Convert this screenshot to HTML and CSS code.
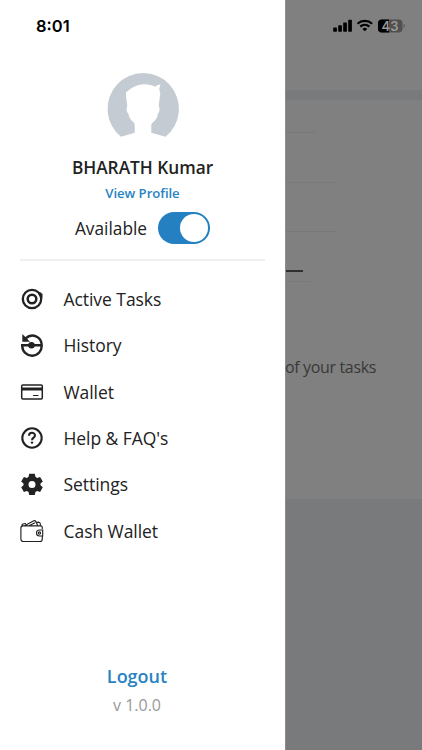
FILE: index.html
```
<!DOCTYPE html>
<html lang="en">
<head>
<meta charset="utf-8">
<meta name="viewport" content="width=device-width, initial-scale=1">
<title>Menu</title>
<link rel="stylesheet" href="styles.css">
</head>
<body>
<div class="screen">
  <aside class="drawer">
    <div class="clock">8:01</div>
    <section class="profile">
      <svg class="avatar" viewBox="0 0 72 64">
        <path fill="#c4cbd2" d="M14 63.700A35.700 35.700 0 1 1 58.500 63.700L44.300 59.700V52Q44.300 50.500 46 49.300C49 47 50.500 44.500 50.700 41C52.800 39 53.200 35.500 51.700 33L53.300 20.300L52.200 16.500L53.300 11L51 12.500L50.500 11.800L48.500 13.700C40 9.500 29 10 19 19.300V23L20.300 33C18.800 35.500 19.500 39 21.500 41C22 44.500 23.500 47 26.500 49.300Q27.700 50.500 27.700 52V59.700Z"/>
      </svg>
      <h1 class="name">BHARATH Kumar</h1>
      <a class="view">View Profile</a>
      <div class="availability"><span>Available</span><span class="switch"><span class="knob"></span></span></div>
    </section>
    <nav class="menu">
      <a class="item"><svg viewBox="0 0 24 24" fill="none" stroke="#222"><circle cx="12" cy="12" r="9.200" stroke-width="2.300"/><circle cx="12" cy="12" r="4.300" stroke-width="2.500"/><path d="M18 6.500l2-1.500 2.500 2v4l-2.500-1z" fill="#222" stroke="none"/></svg><span>Active Tasks</span></a>
      <a class="item"><svg viewBox="0 0 24 24" fill="none" stroke="#222"><path d="M1 12.300h21.500M2.300 13.500A9.600 9.600 0 0 0 21.700 12.500C21.700 3.500 12 -.5 5.500 5.500" stroke-width="2.400"/><path d="M2.300 1v7.800H10z" fill="#222" stroke="none"/><circle cx="11.500" cy="12.300" r="3.300" fill="#222" stroke="none"/></svg><span>History</span></a>
      <a class="item"><svg viewBox="0 0 24 24" fill="none" stroke="#222"><rect x="1.700" y="4.900" width="20.600" height="14" rx="1.200" stroke-width="1.500"/><path d="M1.500 9h21" stroke-width="3"/><path d="M13 15.500h5.500" stroke-width="1"/></svg><span>Wallet</span></a>
      <a class="item"><svg viewBox="0 0 24 24" fill="none" stroke="#222"><circle cx="12" cy="12" r="9.700" stroke-width="2.100"/><path d="M9 9.800C9 5.800 15 6 15 9.500C15 11.700 12 11.600 12 14.200" stroke-width="2"/><circle cx="12" cy="16.600" r="1.200" fill="#222" stroke="none"/></svg><span>Help &amp; FAQ's</span></a>
      <a class="item"><svg viewBox="0 0 24 24" fill="#222"><path fill-rule="evenodd" d="M9.200 1.800h5.600l.6 3 1.800 1.100 2.900-1 2.700 4.700-2.300 1.900v1.800l2.300 1.900-2.700 4.700-2.900-1-1.800 1.100-.6 3H9.200l-.6-3-1.800-1.100-2.900 1-2.700-4.700 2.300-1.900v-1.800L1.200 9.600l2.700-4.700 2.900 1 1.800-1.100zM12 8.900a3.500 3.500 0 1 0 0 7 3.500 3.500 0 0 0 0-7z"/></svg><span>Settings</span></a>
      <a class="item"><svg viewBox="0 0 24 24" fill="none" stroke="#222" stroke-width="1.150"><path d="M22.300 10V8.500Q22.300 6.800 20.500 6.800H3Q.9 6.800.9 9V20Q.9 22.500 3.500 22.500H20Q22.300 22.500 22.300 20V17.500M2 6.800Q1.700 4.800 4 4.700L6 4.600M4.500 6.700L13.800 1.800Q15.200 1.200 15.800 2.500L17.800 6.700M9 6.700l6-2.900M15.800 3.500l3.100-.3Q20 3.300 20.200 4.500l.3 2.300M22.700 11H19.500a3 3 0 0 0 0 6H22.700z"/><circle cx="19.500" cy="14" r="1.100"/></svg><span>Cash Wallet</span></a>
    </nav>
    <footer class="footer">
      <a class="logout">Logout</a>
      <div class="version">v 1.0.0</div>
    </footer>
  </aside>
  <main class="page">
    <header class="status">
      <svg viewBox="0 0 72 14">
        <path d="M.8 8.500h2.500q.6 0 .6.600v3q0 .6-.6.600H.8q-.6 0-.6-.6v-3q0-.6.600-.6zM5.800 6.300h2.500q.6 0 .6.600v5.200q0 .6-.6.600H5.800q-.6 0-.6-.6V6.900q0-.6.600-.6zM10.800 3.500h2.500q.6 0 .6.600v8q0 .6-.6.600h-2.500q-.6 0-.6-.6v-8q0-.6.600-.6zM15.800.8h2.500q.6 0 .6.600v10.700q0 .6-.6.600h-2.500q-.6 0-.6-.6V1.400q0-.6.600-.6z"/>
        <path d="M24.500 4.700a11 11 0 0 1 14.600 0M27.200 7.600a7 7 0 0 1 9.200 0" fill="none" stroke="#000" stroke-width="2.200"/>
        <path d="M29.400 9.900a3.500 3.500 0 0 1 4.800 0L31.800 12.300z"/>
        <rect x="45" y=".5" width="24.500" height="13" rx="3.800" fill="#505050"/>
        <path d="M56 .5v13h-7.200Q45 13.500 45 9.700V4.300Q45 .5 48.800.5z"/>
        <path d="M70.700 4.800q1.200.6 1.200 2.200t-1.200 2.200z" fill="#555"/>
        <text x="57" y="11.500" text-anchor="middle" class="charge">43</text>
      </svg>
    </header>
    <div class="band"></div>
    <section class="content">
      <div class="rule short"></div>
      <div class="rule second"></div>
      <div class="rule third"></div>
      <div class="mark"></div>
      <div class="rule last"></div>
      <p class="caption">of your tasks</p>
    </section>
  </main>
</div>
</body>
</html>
```
FILE: styles.css
```
* { box-sizing: border-box; }
body { margin: 0; font-family: "Open Sans", "Noto Sans", sans-serif; }
.screen { display: grid; grid-template-columns: 285px 1fr; width: 422px; height: 750px; overflow: hidden; background: #797a7c; }
.drawer { display: flex; flex-direction: column; height: 750px; background: #fff; color: #222; }
.clock { height: 73px; padding: 15.500px 0 0 36px; font: 600 16.500px/20px Inter, sans-serif; color: #000; }
.profile { display: flex; flex-direction: column; align-items: center; height: 188px; margin: 0 20px; border-bottom: 2px solid #efefef; }
.avatar { width: 72px; height: 64px; overflow: visible; }
.name { margin: 19px 0 0; font-size: 17.300px; line-height: 24px; font-weight: 600; letter-spacing: -.02px; white-space: nowrap; }
.view { margin-top: 3px; font-size: 13.200px; line-height: 20px; font-weight: 600; letter-spacing: -.08px; color: #2783c2; }
.availability { display: flex; align-items: center; gap: 11px; margin-top: 8px; height: 34px; font-size: 17.300px; }
.switch { display: flex; align-items: center; justify-content: flex-end; width: 52px; height: 32px; padding: 2px; border-radius: 16px; background: #2480c0; }
.knob { width: 28px; height: 28px; border-radius: 50%; background: #fff; }
.menu { display: flex; flex-direction: column; padding: 15px 20px 0; }
.item { display: flex; align-items: center; gap: 19.500px; height: 46.300px; font-size: 17.500px; letter-spacing: -.06px; white-space: nowrap; }
.item svg { width: 24px; height: 24px; }
.footer { margin-top: auto; height: 86px; padding-right: 11px; text-align: center; }
.logout { display: block; font-size: 18px; line-height: 25px; font-weight: 600; color: #2783c2; }
.version { margin-top: 5px; font-size: 16px; line-height: 22px; color: #999; }
.page { border-left: 1px solid #8d8d8d; }
.status { height: 90px; padding: 18.500px 0 0 46.500px; background: #808080; }
.status svg { display: block; width: 72px; height: 14px; }
.charge { font: 600 13px Inter, sans-serif; fill: #999; }
.band { height: 10px; background: #797a7c; }
.content { height: 399px; padding-top: 32px; background: #808080; }
.rule { height: 1px; width: 30px; background: #797979; }
.second { width: 49px; margin-top: 49px; }
.third { width: 50px; margin-top: 48px; }
.mark { width: 17px; height: 2px; margin-top: 38px; background: #303030; }
.last { width: 24px; margin-top: 9px; }
.caption { margin: 73px 0 0 -1px; font-size: 16px; line-height: 24px; letter-spacing: -.35px; color: #383838; white-space: nowrap; }
```
